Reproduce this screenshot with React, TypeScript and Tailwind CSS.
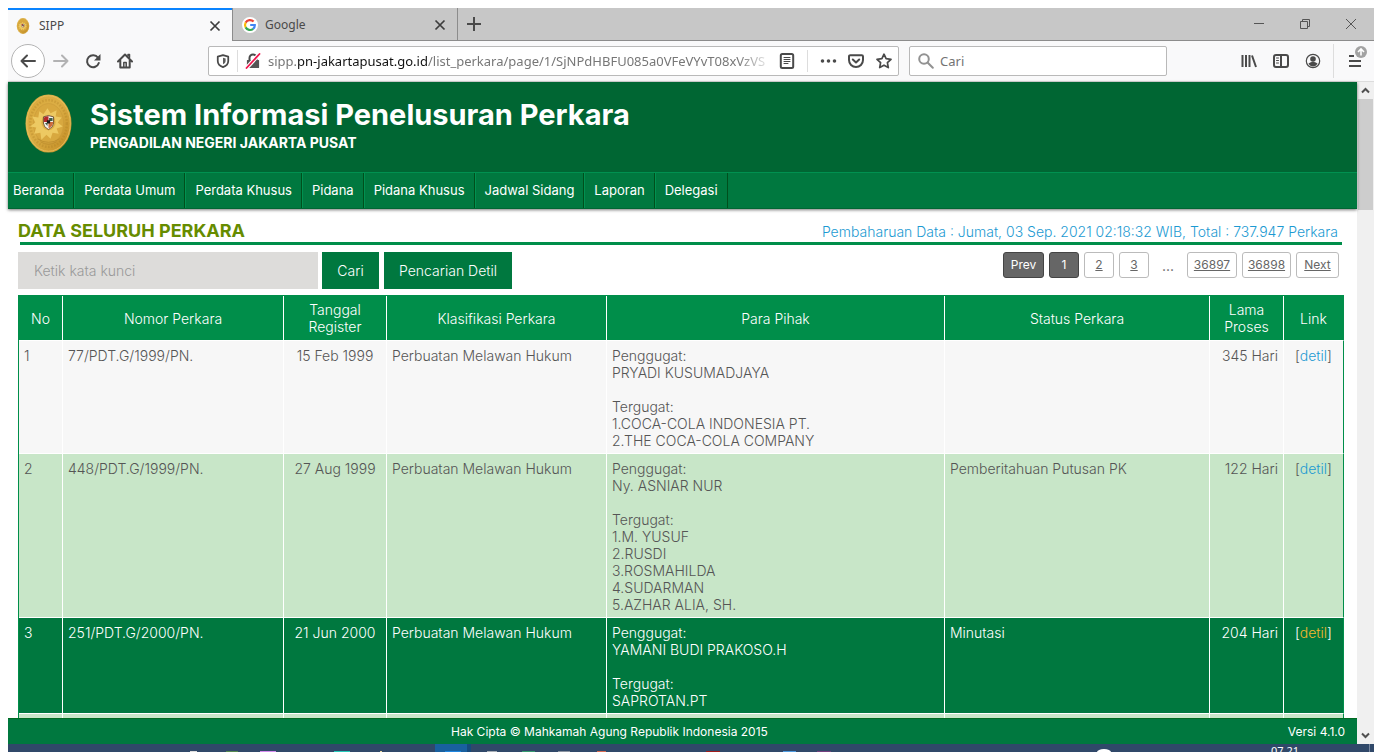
import React from "react";

type Row = {
  no: number;
  nomor: string;
  tanggal: string;
  klasifikasi: string;
  penggugat: string[];
  tergugat: string[];
  status: string;
  lama: string;
  tone: string;
  link: string;
};

const rows: Row[] = [
  {
    no: 1,
    nomor: "77/PDT.G/1999/PN.",
    tanggal: "15 Feb 1999",
    klasifikasi: "Perbuatan Melawan Hukum",
    penggugat: ["PRYADI KUSUMADJAYA"],
    tergugat: ["1.COCA-COLA INDONESIA PT.", "2.THE COCA-COLA COMPANY"],
    status: "",
    lama: "345 Hari",
    tone: "bg-[#f7f7f7] text-[#555]",
    link: "text-[#1c9ad2]",
  },
  {
    no: 2,
    nomor: "448/PDT.G/1999/PN.",
    tanggal: "27 Aug 1999",
    klasifikasi: "Perbuatan Melawan Hukum",
    penggugat: ["Ny. ASNIAR NUR"],
    tergugat: ["1.M. YUSUF", "2.RUSDI", "3.ROSMAHILDA", "4.SUDARMAN", "5.AZHAR ALIA, SH."],
    status: "Pemberitahuan Putusan PK",
    lama: "122 Hari",
    tone: "bg-[#c8e6c8] text-[#555]",
    link: "text-[#1c9ad2]",
  },
  {
    no: 3,
    nomor: "251/PDT.G/2000/PN.",
    tanggal: "21 Jun 2000",
    klasifikasi: "Perbuatan Melawan Hukum",
    penggugat: ["YAMANI BUDI PRAKOSO.H"],
    tergugat: ["SAPROTAN.PT"],
    status: "Minutasi",
    lama: "204 Hari",
    tone: "bg-[#00783f] text-white",
    link: "text-[#f5b82e]",
  },
];

const menu = [
  "Beranda",
  "Perdata Umum",
  "Perdata Khusus",
  "Pidana",
  "Pidana Khusus",
  "Jadwal Sidang",
  "Laporan",
  "Delegasi",
];

const columns = [
  { label: "No", width: "w-[44px]" },
  { label: "Nomor Perkara", width: "w-[221px]" },
  { label: "Tanggal Register", width: "w-[103px]" },
  { label: "Klasifikasi Perkara", width: "w-[220px]" },
  { label: "Para Pihak", width: "" },
  { label: "Status Perkara", width: "w-[265px]" },
  { label: "Lama Proses", width: "w-[74px]" },
  { label: "Link", width: "w-[60px]" },
];

function Seal({ className }: { className: string }) {
  return (
    <svg className={className} viewBox="0 0 46 58" aria-hidden="true">
      <defs>
        <linearGradient id="gold" x1="0" y1="0" x2="1" y2="1">
          <stop offset="0" stopColor="#d9a93c" />
          <stop offset=".45" stopColor="#dcae45" />
          <stop offset="1" stopColor="#c08a22" />
        </linearGradient>
      </defs>
      <ellipse cx="23" cy="29" rx="22.6" ry="28.6" fill="url(#gold)" />
      <ellipse cx="23" cy="29" rx="21.4" ry="27.3" fill="none" stroke="#e6c263" strokeWidth=".8" />
      <ellipse cx="23" cy="29" rx="18" ry="23" fill="none" stroke="#a87a20" strokeWidth="2.4" strokeDasharray="1.6 1.5" opacity=".3" />
      <ellipse cx="23" cy="29" rx="14.8" ry="19.6" fill="#d8a83f" stroke="#c8983a" strokeWidth=".5" />
      <path
        d="M22 14l3 5 6-3-1 6 6 1-4 5 5 4-6 2 2 5-6-1-2 6-4-4-5 5-1-7-6 1 2-6-6-1 5-4-3-6 6 1 1-6 4 3z"
        fill="#edc962"
      />
      <ellipse cx="23" cy="28" rx="7" ry="7.6" fill="#dcae45" />
      <path d="M18 22.5q5-2.5 10 0v6q0 4-5 6.5q-5-2.5-5-6.5z" fill="#f4f4ee" stroke="#5a3a17" strokeWidth=".8" />
      <path d="M18.5 23q2.5-1.2 4.5-1.2v5.700h-4.500z" fill="#b52a2a" />
      <path d="M23 27.5h4.600q0 4-4.600 6.400z" fill="#d06a3c" />
      <path d="M23.600 23.500h3.400v3h-3.400zM19.500 28.500h2.500v3z" fill="#3f5d4a" />
      <rect x="21.400" y="25.800" width="3.200" height="3.200" fill="#1d1d1d" />
      <path d="M12 44q11 7 22 0M15 47q8 5 16 0" fill="none" stroke="#b98a2c" strokeWidth=".7" />
    </svg>
  );
}

function GoogleMark() {
  return (
    <svg className="size-4" viewBox="0 0 16 16" aria-hidden="true">
      <circle cx="8" cy="8" r="8" fill="#fff" />
      <g fill="none" strokeWidth="2.200">
        <path d="M11.600 4.600A5 5 0 0 0 3.600 5.600" stroke="#ea4335" />
        <path d="M3.700 5.500a5 5 0 0 0 0 5" stroke="#fbbc05" />
        <path d="M3.600 10.400a5 5 0 0 0 7.600 1.400" stroke="#34a853" />
        <path d="M11.100 11.900A4.700 4.700 0 0 0 12.800 8H8.200" stroke="#4285f4" />
      </g>
    </svg>
  );
}

function Cross() {
  return (
    <svg className="size-3" viewBox="0 0 12 12" aria-hidden="true">
      <path d="M1.500 1.500l9 9M10.500 1.500l-9 9" stroke="#3d3d3d" strokeWidth="1.700" />
    </svg>
  );
}

function Icon({ children, className = "size-4" }: { children: React.ReactNode; className?: string }) {
  return (
    <svg
      className={className}
      viewBox="0 0 16 16"
      fill="none"
      stroke="#4a4a4a"
      strokeWidth="2"
      strokeLinecap="round"
      strokeLinejoin="round"
      aria-hidden="true"
    >
      {children}
    </svg>
  );
}

function Tabs() {
  return (
    <div className="flex h-[33px] shrink-0 bg-[#c7c7c7] text-[12px] text-[#4a4a4a]">
      <div className="flex w-[224px] items-center border-t-2 border-[#0a84ff] bg-[#f9f9fa] pr-[11px] pl-[7px]">
        <Seal className="h-4 w-4" />
        <span className="ml-2 flex-1">SIPP</span>
        <button aria-label="Tutup tab SIPP"><Cross /></button>
      </div>
      <div className="flex w-[226px] items-center border-x border-b border-[#8c8c8c] pt-px pr-[11px] pl-[9px]">
        <GoogleMark />
        <span className="ml-[7px] flex-1">Google</span>
        <button aria-label="Tutup tab Google"><Cross /></button>
      </div>
      <div className="flex flex-1 items-center border-b border-[#8c8c8c] pl-2">
        <button aria-label="Tab baru">
          <Icon><path d="M8 1v14M1 8h14" strokeLinecap="butt" /></Icon>
        </button>
        <div className="ml-auto flex items-center gap-[34px] pr-[17px]">
          <button aria-label="Kecilkan">
            <svg className="size-3" viewBox="0 0 12 12"><path d="M1 5.500h10" stroke="#555" /></svg>
          </button>
          <button aria-label="Pulihkan">
            <svg className="size-3" viewBox="0 0 12 12" fill="none" stroke="#555">
              <path d="M1.500 3.500h7v7h-7zM3.500 3.500v-2h7v7h-2" />
            </svg>
          </button>
          <button aria-label="Tutup jendela">
            <svg className="size-3" viewBox="0 0 12 12"><path d="M1 1l10 10M11 1L1 11" stroke="#555" /></svg>
          </button>
        </div>
      </div>
    </div>
  );
}

function Toolbar() {
  return (
    <div className="flex h-[41px] shrink-0 items-center border-b border-[#dcdcdc] bg-[#f9f9fa] pl-[3px]">
      <button aria-label="Kembali" className="flex size-[34px] items-center justify-center rounded-full border border-[#b4b4b4] bg-white">
        <Icon><path d="M15 8H1.500M7 2.500L1.500 8 7 13.500" /></Icon>
      </button>
      <button aria-label="Maju" className="ml-2 opacity-40">
        <Icon><path d="M1 8h13.500M9 2.500L14.500 8 9 13.500" /></Icon>
      </button>
      <button aria-label="Muat ulang" className="ml-4">
        <Icon>
          <path d="M13 4.800A6 6 0 1 0 13.800 10" />
          <path d="M15.500 1v6.500H9z" fill="#4a4a4a" stroke="none" />
        </Icon>
      </button>
      <button aria-label="Beranda peramban" className="ml-4">
        <Icon>
          <path d="M1 8.500L8 1.500l7 7M3.300 7.500v7h9.400v-7" />
          <path d="M6.800 14V9.500h2.400V14M11 3V1.500h1.500v3" strokeWidth="1.500" />
        </Icon>
      </button>

      <div className="ml-[75px] flex h-[30px] w-[691px] items-center rounded-[2px] border border-[#b9b9b9] bg-white">
        <span className="ml-[7px]">
          <Icon className="size-3.5">
            <path d="M8 1.200L14 3v5c0 3.500-2.500 5.800-6 7-3.500-1.200-6-3.500-6-7V3z" />
            <path d="M8 4.200v7.600c2.200-1 3-2.200 3-4.300V5z" fill="#5c5c5c" stroke="none" />
          </Icon>
        </span>
        <span className="ml-[7px] h-[22px] w-px bg-[#ddd]" />
        <span className="ml-[7px]">
          <Icon>
            <path d="M4.500 7V5a3.500 3.500 0 0 1 7 0v2" />
            <rect x="2.500" y="7.500" width="11" height="7" fill="#555" stroke="#555" strokeWidth="1.200" />
            <path d="M1.500 15L14.500 1" stroke="#fff" strokeWidth="4" />
            <path d="M1.500 15L14.500 1" stroke="#f0144c" strokeWidth="1.800" />
          </Icon>
        </span>
        <div className="ml-[7px] w-[505px] pt-px text-[13px] whitespace-nowrap text-[#777] [mask-image:linear-gradient(to_right,black_93%,transparent)]">
          sipp.<span className="text-[#111]">pn-jakartapusat.go.id</span>/list_perkara/page/1/SjNPdHBFU085a0VFeVYvT08xVzVS
        </div>
        <button aria-label="Tampilan pembaca" className="ml-[6px]">
          <Icon>
            <rect x="1.800" y="1" width="12.400" height="14" rx="1.500" />
            <path d="M5 4.500h6M5 6.500h6M5 8.500h6M5 10.500h4" strokeWidth="1" />
          </Icon>
        </button>
        <span className="ml-3 h-[22px] w-px bg-[#ddd]" />
        <button aria-label="Tindakan halaman" className="ml-3">
          <Icon className="h-4 w-[17px]"><path d="M2 8h.01M8 8h.01M14 8h.01" strokeWidth="3.600" /></Icon>
        </button>
        <button aria-label="Simpan ke Pocket" className="ml-[11px]">
          <Icon>
            <path d="M2.300 2.200h11.400A1.300 1.300 0 0 1 15 3.500V7A7 7 0 0 1 1 7V3.500a1.300 1.300 0 0 1 1.300-1.300z" />
            <path d="M4.800 6.500L8 9.500l3.200-3" />
          </Icon>
        </button>
        <button aria-label="Tandai halaman" className="ml-3">
          <Icon><path d="M8 1.200l2.100 4.500 4.900.6-3.600 3.400.9 4.900L8 12.200l-4.300 2.400.9-4.900L1 6.300l4.900-.6z" strokeWidth="1.700" /></Icon>
        </button>
      </div>

      <div className="ml-[10px] flex h-[30px] w-[258px] items-center rounded-[2px] border border-[#b9b9b9] bg-white pl-2">
        <Icon className="size-4 opacity-60">
          <circle cx="6" cy="6" r="4.800" />
          <path d="M9.800 9.800l5 5" />
        </Icon>
        <input aria-label="Cari di web" placeholder="Cari" className="ml-[6px] min-w-0 flex-1 pt-px text-[13px] outline-none placeholder:text-[#737373]" />
      </div>

      <div className="ml-auto flex h-full items-center">
        <button aria-label="Pustaka">
          <Icon><path d="M1.500 2v12M5 2v12M8.500 2v12M11 2.500l4 11.500" strokeLinecap="butt" /></Icon>
        </button>
        <button aria-label="Bilah samping" className="ml-4">
          <Icon>
            <rect x="1" y="2" width="14" height="12" rx="2" />
            <path d="M8 2v12" />
            <path d="M3.500 5h2M3.500 7.500h2M3.500 10h2" strokeWidth="1" />
          </Icon>
        </button>
        <button aria-label="Akun" className="ml-4">
          <Icon>
            <circle cx="8" cy="8" r="6.700" strokeWidth="1.200" />
            <circle cx="8" cy="6" r="2.800" fill="#4a4a4a" stroke="none" />
            <path d="M3.500 10.500q4.500-3.500 9 0-1.500 3-4.500 3t-4.500-3z" fill="#4a4a4a" stroke="none" />
          </Icon>
        </button>
        <span className="ml-3 h-[34px] w-px bg-[#ddd]" />
        <button aria-label="Menu peramban" className="mr-[7px] ml-[14px]">
          <svg className="h-8 w-[19px]" viewBox="0 0 19 32" fill="none" aria-hidden="true">
            <path d="M1 11h5M1 16h12M1 21h12" stroke="#4a4a4a" strokeWidth="2" />
            <circle cx="13" cy="7" r="6" fill="#a2a2a2" />
            <path d="M13 10.500v-6M10 7l3-3 3 3" stroke="#fff" strokeWidth="1.600" />
          </svg>
        </button>
      </div>
    </div>
  );
}

function SiteHeader() {
  return (
    <header className="relative z-10 shrink-0 text-white shadow-[0_1px_3px_#0008]">
      <div className="flex h-[90px] bg-[#006633] pt-3 pl-[17px]">
        <Seal className="h-[59px] w-[47px]" />
        <div className="ml-[18px] pt-[3px]">
          <h1 className="text-[29px] leading-[36px] font-bold">Sistem Informasi Penelusuran Perkara</h1>
          <p className="text-[14px] leading-5 font-bold">PENGADILAN NEGERI JAKARTA PUSAT</p>
        </div>
      </div>
      <nav className="flex h-[37px] border-t border-b border-[#009150] border-b-[#006633] bg-[#00783f] text-[13px]">
        {menu.map((m, i) => (
          <a
            key={m}
            href="#"
            className={`flex items-center border-r border-r-[#004f1c] pr-[9px] ${i ? "border-l border-l-[#009150] pl-[9px]" : "pl-[5px]"}`}
          >
            {m}
          </a>
        ))}
      </nav>
    </header>
  );
}

function Pager() {
  const base = "flex h-[26px] items-center justify-center rounded-[3px] border text-[12px]";
  const off = "border-[#bbb] bg-white text-[#666] underline";
  const on = "border-[#444] bg-[#666] text-white";
  return (
    <nav aria-label="Halaman" className="mr-[5px] flex gap-[5px]">
      <span className={`${base} ${on} w-[41px]`}>Prev</span>
      <span className={`${base} ${on} w-[30px]`}>1</span>
      <a href="#" className={`${base} ${off} w-[30px]`}>2</a>
      <a href="#" className={`${base} ${off} w-[30px]`}>3</a>
      <span className="flex h-[26px] w-[28px] items-center justify-center text-[14px] text-[#666]">...</span>
      <a href="#" className={`${base} ${off} w-[50px]`}>36897</a>
      <a href="#" className={`${base} ${off} w-[49px]`}>36898</a>
      <a href="#" className={`${base} ${off} w-[43px]`}>Next</a>
    </nav>
  );
}

function CaseTable() {
  const cell = "border-t border-r border-white px-[5px] pt-[6px] pb-[4px]";
  return (
    <table className="mt-[6px] w-full table-fixed border-separate border-spacing-0 border border-r-0 border-[#008e4a] text-[14px] leading-[17px]">
      <thead>
        <tr className="h-[44px] bg-[#008e4a] text-white">
          {columns.map((c) => (
            <th key={c.label} scope="col" className={`border-r border-white px-2 font-light last:border-[#008e4a] ${c.width}`}>
              {c.label}
            </th>
          ))}
        </tr>
      </thead>
      <tbody>
        {rows.map((r) => (
          <tr key={r.no} className={`align-top font-light ${r.tone}`}>
            <td className={cell}>{r.no}</td>
            <td className={cell}>{r.nomor}</td>
            <td className={`${cell} text-center`}>{r.tanggal}</td>
            <td className={cell}>{r.klasifikasi}</td>
            <td className={cell}>
              <p>Penggugat:</p>
              {r.penggugat.map((p) => <p key={p}>{p}</p>)}
              <p className="mt-[17px]">Tergugat:</p>
              {r.tergugat.map((p) => <p key={p}>{p}</p>)}
            </td>
            <td className={cell}>{r.status}</td>
            <td className={`${cell} text-right`}>{r.lama}</td>
            <td className={`${cell} border-r-[#008e4a] text-center`}>
              [<a href="#" className={r.link}>detil</a>]
            </td>
          </tr>
        ))}
        <tr className="h-8 bg-[#c8e6c8]">
          {columns.map((c) => <td key={c.label} className={`${cell} last:border-r-[#008e4a]`} />)}
        </tr>
      </tbody>
    </table>
  );
}

function Scrollbar() {
  return (
    <div className="flex w-[17px] shrink-0 flex-col bg-[#f0f0f0]" aria-hidden="true">
      <svg className="h-[17px] w-full" viewBox="0 0 17 17" fill="none">
        <path d="M5 10.500L8.500 7l3.500 3.500" stroke="#505050" strokeWidth="2" />
      </svg>
      <div className="mx-px h-[111px] bg-[#cdcdcd]" />
      <svg className="mt-auto h-[17px] w-full" viewBox="0 0 17 17" fill="none">
        <path d="M5 6.500L8.500 10l3.500-3.500" stroke="#505050" strokeWidth="2" />
      </svg>
    </div>
  );
}

function Taskbar() {
  return (
    <div className="flex h-2 shrink-0 overflow-hidden bg-[#304869] text-white">
      <svg className="h-2 w-[1104px] shrink-0" viewBox="8 0 1104 8" aria-hidden="true">
        <path d="M435 0h32v8h-32z" fill="#19609f" />
        <path d="M467 0h4v8h-4z" fill="#164a7d" />
        <path d="M190 7h7v1h-7z" fill="#ddd" />
        <path d="M226 7h12v1h-12z" fill="#568a50" />
        <path d="M260 7h16v1h-16z" fill="#d58cf0" />
        <path d="M334 7h16v1h-16z" fill="#25cbbb" />
        <path d="M380 7h2v1h-2z" fill="#ead9a0" />
        <path d="M445 7h16v1h-16z" fill="#1f86e0" />
        <path d="M487 7h10v1h-10z" fill="#a6adb5" />
        <path d="M522 7h13v1h-13z" fill="#359b70" />
        <path d="M558 7h12v1h-12z" fill="#8a93a0" />
        <path d="M597 7h9v1h-9z" fill="#d96b52" />
        <path d="M706 7h14v1h-14z" fill="#a01c1c" />
        <path d="M783 7h13v1h-13z" fill="#4e9be0" />
        <path d="M817 7h14v1h-14z" fill="#74407f" />
        <path d="M1097 8a7 3 0 0 1 14 0z" fill="#fff" />
      </svg>
      <span className="mr-[70px] ml-auto text-[11px] leading-[13px]">07.21</span>
      <span className="mr-1 w-px bg-[#7787a0]" />
    </div>
  );
}

export default function App() {
  return (
    <div className="flex h-screen flex-col overflow-hidden bg-white px-2 pt-2 font-['Noto_Sans',sans-serif]">
      <Tabs />
      <Toolbar />
      <div className="flex min-h-0 flex-1">
        <div className="flex min-w-0 flex-1 flex-col font-[Inter,'Noto_Sans',sans-serif]">
          <SiteHeader />
          <main className="min-h-0 flex-1 overflow-hidden pr-[13px] pl-[10px]">
            <div className="mx-[2px] flex h-[36px] items-end justify-between border-b-3 border-[#008e4a]">
              <h2 className="-ml-[2px] text-[18px] leading-[23px] font-bold text-[#668c00]">DATA SELURUH PERKARA</h2>
              <p className="pr-1 text-[14px] leading-5 font-light text-[#1c9ad2]">
                Pembaharuan Data : Jumat, 03 Sep. 2021 02:18:32 WIB, Total : 737.947 Perkara
              </p>
            </div>
            <div className="mt-[7px] flex justify-between">
              <form className="flex text-[14px] font-light" onSubmit={(e) => e.preventDefault()}>
                <input aria-label="Kata kunci" placeholder="Ketik kata kunci" className="h-[37px] w-[300px] bg-[#dddcda] px-4 outline-none placeholder:text-[#999]" />
                <button className="ml-1 w-[57px] bg-[#00783f] text-white">Cari</button>
                <button type="button" className="ml-[5px] w-[128px] bg-[#00783f] text-white">Pencarian Detil</button>
              </form>
              <Pager />
            </div>
            <CaseTable />
          </main>
          <footer className="flex h-[26px] shrink-0 items-center border-t border-[#006a20] bg-[#00783f] pl-[443px] text-[12px] text-white">
            <span>Hak Cipta © Mahkamah Agung Republik Indonesia 2015</span>
            <span className="mr-3 ml-auto">Versi 4.1.0</span>
          </footer>
        </div>
        <Scrollbar />
      </div>
      <Taskbar />
    </div>
  );
}
